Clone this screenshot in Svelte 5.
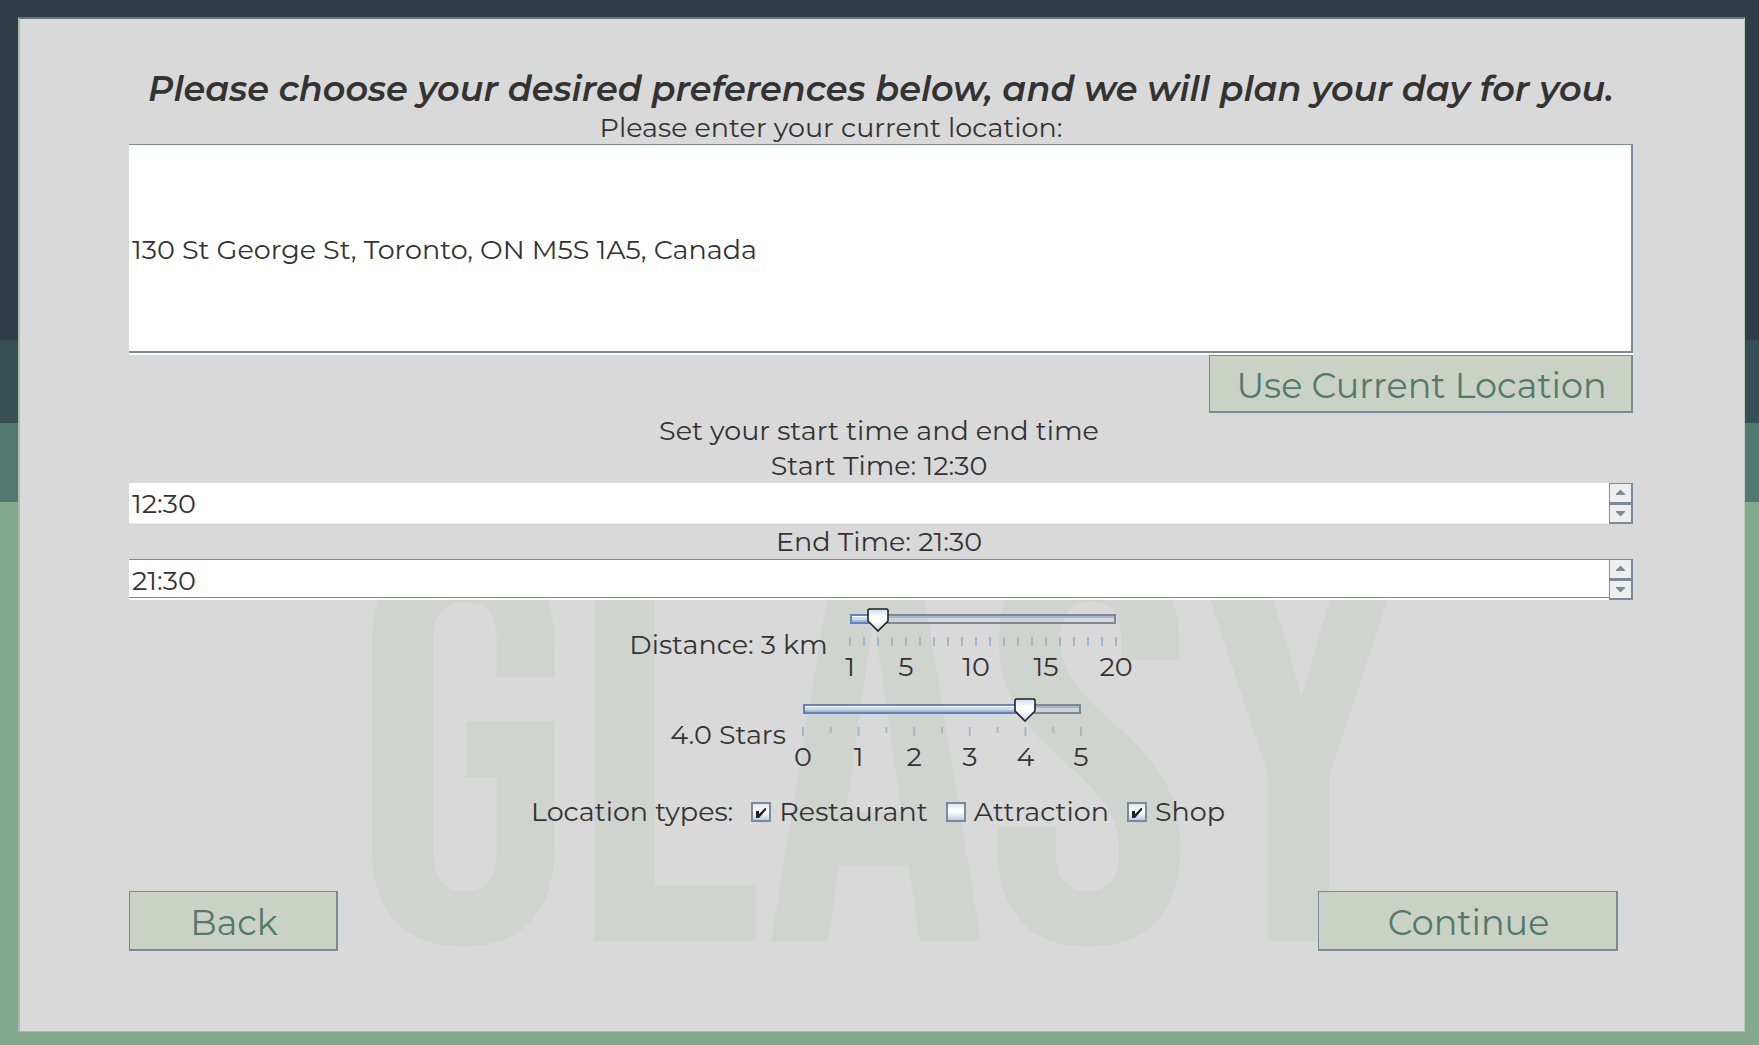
<script>
  let location = $state('130 St George St, Toronto, ON M5S 1A5, Canada');
  let start = $state('12:30');
  let end = $state('21:30');
  let distance = $state(3);
  let stars = $state(4);
  let types = $state([
    { name: 'Restaurant', on: true },
    { name: 'Attraction', on: false },
    { name: 'Shop', on: true }
  ]);

  const distanceTicks = Array.from({ length: 20 }, (_, i) => i + 1);
  const distanceLabels = [1, 5, 10, 15, 20];
  const starTicks = Array.from({ length: 11 }, (_, i) => i / 2);
  const starLabels = [0, 1, 2, 3, 4, 5];

  const percent = (value, min, max) => ((value - min) / (max - min)) * 100;

  function shift(time, minutes) {
    const [h, m] = time.split(':').map(Number);
    const total = (h * 60 + m + minutes + 1440) % 1440;
    return `${String(Math.floor(total / 60)).padStart(2, '0')}:${String(total % 60).padStart(2, '0')}`;
  }
</script>

{#snippet arrow(up)}
  <svg class="arrow" viewBox="0 0 9 5" aria-hidden="true">
    <path d={up ? 'M4 0h1l4 4v1H0V4z' : 'M0 0h9v1L5 5H4L0 1z'} />
  </svg>
{/snippet}

{#snippet scale(ticks, labels, min, max)}
  <svg class="scale" aria-hidden="true">
    {#each ticks as t}
      <line
        x1="{percent(t, min, max)}%"
        x2="{percent(t, min, max)}%"
        y1="5"
        y2={Number.isInteger(t) ? 14 : 11}
      />
    {/each}
    {#each labels as l}
      <text x="{percent(l, min, max)}%" y="44">{l}</text>
    {/each}
  </svg>
{/snippet}

<div class="page">
  <main class="panel">
    <h1>Please choose your desired preferences below, and we will plan your day for you.</h1>

    <label class="location-label" for="location">Please enter your current location:</label>
    <input id="location" class="location" type="text" bind:value={location} />
    <button class="action locate" type="button">Use Current Location</button>

    <p class="caption">Set your start time and end time</p>
    <label class="caption" for="start">Start Time: {start}</label>
    <div class="spinner">
      <input id="start" type="text" bind:value={start} />
      <div class="steps">
        <button type="button" aria-label="Later start" onclick={() => (start = shift(start, 30))}>{@render arrow(true)}</button>
        <button type="button" aria-label="Earlier start" onclick={() => (start = shift(start, -30))}>{@render arrow(false)}</button>
      </div>
    </div>
    <label class="caption" for="end">End Time: {end}</label>
    <div class="spinner lined">
      <input id="end" type="text" bind:value={end} />
      <div class="steps">
        <button type="button" aria-label="Later end" onclick={() => (end = shift(end, 30))}>{@render arrow(true)}</button>
        <button type="button" aria-label="Earlier end" onclick={() => (end = shift(end, -30))}>{@render arrow(false)}</button>
      </div>
    </div>

    <section class="lower">
      <div class="watermark" aria-hidden="true">GLASY</div>

      <div class="slider-row">
        <label for="distance">Distance: {distance} km</label>
        <div class="slider distance">
          <div class="rail"><div class="fill" style="width: {percent(distance, 1, 20)}%"></div></div>
          <input id="distance" type="range" min="1" max="20" bind:value={distance} />
          {@render scale(distanceTicks, distanceLabels, 1, 20)}
        </div>
      </div>

      <div class="slider-row tight">
        <label for="stars">{stars.toFixed(1)} Stars</label>
        <div class="slider stars">
          <div class="rail"><div class="fill" style="width: {percent(stars, 0, 5)}%"></div></div>
          <input id="stars" type="range" min="0" max="5" step="0.5" bind:value={stars} />
          {@render scale(starTicks, starLabels, 0, 5)}
        </div>
      </div>

      <div class="types" role="group" aria-labelledby="types-label">
        <span id="types-label">Location types:</span>
        {#each types as type}
          <label class="tick">
            <input type="checkbox" bind:checked={type.on} />
            <svg viewBox="0 0 20 20" aria-hidden="true"><path d="M5 9h3v3l6-6h1v2l-7 8H5z" /></svg>
            <span>{type.name}</span>
          </label>
        {/each}
      </div>

      <div class="nav">
        <button class="action back" type="button">Back</button>
        <button class="action continue" type="button">Continue</button>
      </div>
    </section>
  </main>
</div>

<style>
  :global(body) {
    margin: 0;
  }

  .page {
    box-sizing: border-box;
    min-height: 100vh;
    display: flex;
    padding: 17px 14px 13px 18px;
    background: linear-gradient(
      #2f3e46 0 32.5%,
      #354f52 32.5% 40.5%,
      #52796f 40.5% 48%,
      #84a98c 48%
    );
    font-family: Montserrat, Inter, "Open Sans", sans-serif;
    font-size: 27px;
    line-height: 35px;
    color: #333;
  }

  .page :is(input, button) {
    font: inherit;
    color: inherit;
    border-radius: 0;
    margin: 0;
  }

  .panel {
    box-sizing: border-box;
    flex: 1;
    min-width: 0;
    display: flex;
    flex-direction: column;
    padding: 48px 111px 0 109px;
    border: 2px solid #a9bbae;
    border-top-color: #667378;
    border-right: 1px solid #bccabe;
    border-bottom-width: 1px;
    background: #d9d9d9;
  }

  h1 {
    margin: 0;
    font-size: 35px;
    line-height: 44px;
    font-weight: 600;
    font-style: italic;
    text-align: center;
    white-space: nowrap;
  }

  .location-label {
    margin-right: 100px;
    line-height: 33px;
    text-align: center;
  }

  .location {
    box-sizing: border-box;
    width: 100%;
    min-height: 60px;
    flex: 1;
    padding: 3px 3px 0;
    border: solid #7a8a99;
    border-width: 1px 2px 2px 0;
    background: #fff;
    box-shadow: 0 2px #fff;
  }

  .page .action {
    box-sizing: border-box;
    height: 60px;
    padding: 4px 0 0 2px;
    border: solid #7a8a99;
    border-width: 1px 2px 2px 1px;
    background: #cad2c5;
    color: #52796f;
    font-size: 35px;
    font-weight: 400;
    line-height: 44px;
  }

  .page .locate {
    align-self: flex-end;
    width: 424px;
    height: 58px;
    margin-top: 2px;
  }

  .caption {
    margin: 0;
    padding-right: 4px;
    text-align: center;
  }

  .spinner {
    display: flex;
    height: 41px;
    background: #fff;
  }

  .spinner input {
    box-sizing: border-box;
    flex: 1;
    min-width: 0;
    padding: 0 3px;
    border: solid #eee;
    border-width: 0 0 1px;
    background: #fff;
  }

  .lined input {
    border-color: #7a8a99;
    border-width: 1px 0;
    margin-bottom: 2px;
    padding-top: 3px;
  }

  .steps {
    display: grid;
    width: 24px;
    grid-template-rows: 1fr 1fr;
  }

  .steps button {
    display: grid;
    place-items: center;
    padding: 0;
    border: solid #7a8a99;
    border-width: 1px 2px 2px 1px;
    background: #eee;
  }

  .arrow {
    width: 9px;
    height: 5px;
    fill: #7a8a99;
  }

  .lower {
    position: relative;
    isolation: isolate;
    display: flex;
    flex-direction: column;
    align-items: center;
    padding: 8px 0 80px;
  }

  .watermark {
    position: absolute;
    z-index: -1;
    inset: 0;
    display: flex;
    align-items: flex-end;
    justify-content: center;
    overflow: hidden;
    color: #cfd4cf;
    font-family: "Bebas Neue", "Liberation Sans Narrow", "Roboto Condensed", Roboto, sans-serif;
    font-size: 556px;
    font-weight: 400;
    line-height: 512px;
  }

  .slider-row {
    display: flex;
    align-items: flex-start;
    gap: 11px;
    height: 90px;
    margin-right: 6px;
  }

  .tight {
    gap: 6px;
    margin-right: 0;
  }

  .slider-row label {
    line-height: 74px;
  }

  .slider {
    display: grid;
    grid-template-rows: 24px auto;
  }

  .distance {
    width: 288px;
  }

  .stars {
    width: 300px;
  }

  .rail,
  .slider input {
    grid-area: 1 / 1;
  }

  .rail {
    box-sizing: border-box;
    height: 10px;
    margin: 6px 11px 0;
    border-right: 2px solid #7a8a99;
    background: linear-gradient(
      #7a8a99 0 2px,
      #a3b8cc 2px 4px,
      transparent 4px 8px,
      #7a8a99 8px
    );
  }

  .fill {
    box-sizing: border-box;
    height: 10px;
    border: 2px solid #6382bf;
    border-right: 0;
    background: linear-gradient(#fff 0 1px, #c8ddf2 1px 4px, #a3b8cc 4px 6px);
  }

  .slider input {
    appearance: none;
    width: 100%;
    height: 24px;
    background: none;
  }

  .slider input::-webkit-slider-thumb {
    appearance: none;
    width: 22px;
    height: 24px;
    background: url("data:image/svg+xml,%3Csvg xmlns='http://www.w3.org/2000/svg' viewBox='0 0 22 24'%3E%3Cdefs%3E%3ClinearGradient id='g' x2='0' y2='1'%3E%3Cstop stop-color='%23c8ddf2'/%3E%3Cstop offset='.35' stop-color='%23fff'/%3E%3Cstop offset='.55' stop-color='%23fff'/%3E%3Cstop offset='1' stop-color='%23b8cfe5'/%3E%3C/linearGradient%3E%3C/defs%3E%3Cpath d='M2 1h18l1 1v11L11 23 1 13V2z' fill='url(%23g)' stroke='%23222' stroke-width='1.6'/%3E%3C/svg%3E") center / 100% 100%;
  }

  .scale {
    display: block;
    width: calc(100% - 22px);
    height: 50px;
    margin: 0 11px;
    overflow: visible;
  }

  .scale line {
    stroke: #a3b8cc;
    stroke-width: 2px;
  }

  .scale text {
    fill: #333;
    text-anchor: middle;
  }

  .types {
    display: flex;
    align-items: center;
    gap: 18px;
    margin: 6px 6px 0 0;
  }

  .tick {
    display: grid;
    grid-template-columns: 20px auto;
    align-items: center;
    column-gap: 8px;
  }

  .tick input {
    grid-area: 1 / 1;
    appearance: none;
    box-sizing: border-box;
    width: 20px;
    height: 20px;
    border: 2px solid #7a8a99;
    background: linear-gradient(#dde8f3, #fff 40%, #fff 50%, #b8cfe5);
  }

  .tick svg {
    grid-area: 1 / 1;
    width: 20px;
    height: 20px;
    fill: #222;
    visibility: hidden;
    pointer-events: none;
  }

  .tick input:checked + svg {
    visibility: visible;
  }

  .nav {
    align-self: stretch;
    display: flex;
    justify-content: space-between;
    margin: 62px 15px 0 0;
  }

  .back {
    width: 209px;
  }

  .continue {
    width: 300px;
  }
</style>
